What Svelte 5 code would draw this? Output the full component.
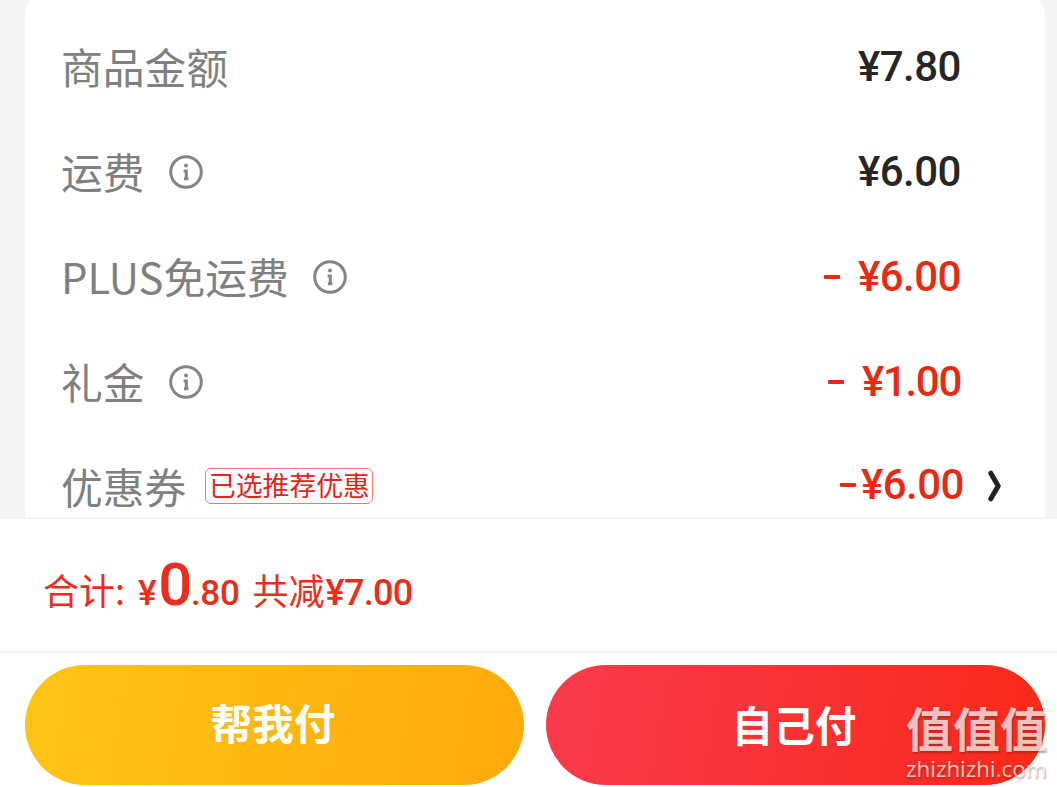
<script lang="ts">
  interface Row {
    label: string;
    info?: boolean;
    tag?: string;
    minus?: "wide" | "tight";
    amount: string;
    arrow?: boolean;
  }

  const rows: Row[] = [
    { label: "商品金额", amount: "7.80" },
    { label: "运费", info: true, amount: "6.00" },
    { label: "PLUS免运费", info: true, minus: "wide", amount: "6.00" },
    { label: "礼金", info: true, minus: "wide", amount: "1.00" },
    {
      label: "优惠券",
      tag: "已选推荐优惠",
      minus: "tight",
      amount: "6.00",
      arrow: true,
    },
  ];
</script>

<main class="page">
  <section class="list">
    <div class="card">
      {#each rows as row (row.label)}
        <div class="row">
          <span class="label">{row.label}</span>
          {#if row.info}
            <svg class="info" viewBox="0 0 34 34" width="34" height="34">
              <circle cx="17" cy="17" r="15.3" />
              <circle class="dot" cx="17" cy="10.4" r="2" />
              <path d="M14.6 16h2.7v8M15 23.8h4.4" />
            </svg>
          {/if}
          {#if row.tag}
            <span class="tag">{row.tag}</span>
          {/if}
          <span class="value" class:discount={row.minus} class:linked={row.arrow}>
            {#if row.minus}
              <i class="minus {row.minus}"></i>
            {/if}
            <span class="num" class:one={row.amount.startsWith("1")}>¥{row.amount}</span>
          </span>
          {#if row.arrow}
            <svg class="arrow" viewBox="0 0 14 32" width="14" height="32">
              <path d="M2.8 3.2L10.2 16L2.8 28.8" />
            </svg>
          {/if}
        </div>
      {/each}
    </div>
  </section>

  <section class="total">
    <span class="cn">合计:</span>
    <span class="num yen">¥</span>
    <span class="num big">0</span>
    <span class="num cents">.80</span>
    <span class="cn saved">共减</span>
    <span class="num off">¥7.00</span>
  </section>

  <footer class="actions">
    <button class="help">帮我付</button>
    <button class="self">自己付</button>
  </footer>

  <div class="watermark">
    <div class="mark">值值值</div>
    <div class="site">zhizhizhi.com</div>
  </div>
</main>

<style>
  :global(body) {
    background: #fff;
  }

  .page {
    position: relative;
    width: 1057px;
    height: 787px;
    overflow: hidden;
    background: #fff;
    font-family: "Noto Sans CJK SC", sans-serif;
  }

  .list {
    box-sizing: border-box;
    height: 519px;
    padding: 0 12px 0 25px;
    overflow: hidden;
    background: #f4f4f4;
    border-bottom: 2px solid #f4f4f4;
  }

  .card {
    box-sizing: border-box;
    height: 560px;
    margin-top: -6px;
    padding: 20px 36px 0 36px;
    border-radius: 20px;
    background: #fff;
  }

  .row {
    display: flex;
    align-items: center;
    height: 105px;
  }

  .label {
    margin-bottom: 2px;
    font-size: 41.8px;
    line-height: 60px;
    color: #808080;
    white-space: nowrap;
  }

  .info {
    margin: 0 0 0 24px;
    fill: none;
    stroke: #858585;
    stroke-width: 3;
  }

  .info .dot {
    fill: #858585;
    stroke: none;
  }

  .tag {
    box-sizing: border-box;
    width: 168px;
    height: 36px;
    margin: 0 0 1px 19px;
    border: 1px solid #e8796c;
    border-radius: 6px;
    font-size: 26.8px;
    line-height: 31px;
    text-align: center;
    white-space: nowrap;
    color: #e1251b;
  }

  .value {
    display: flex;
    align-items: center;
    margin: 1px 48px 0 auto;
    color: #262626;
  }

  .value.linked {
    margin-right: 2px;
    margin-bottom: 4px;
  }

  .discount {
    color: #e62b15;
  }

  .num {
    font-family: Roboto, sans-serif;
    font-weight: 500;
    font-size: 42px;
    line-height: 50px;
    letter-spacing: -0.5px;
  }

  .num.one {
    letter-spacing: -1.3px;
  }

  .minus {
    width: 16px;
    height: 4px;
    border-radius: 1px;
    background: currentColor;
  }

  .minus.wide {
    margin-right: 18px;
  }

  .minus.tight {
    margin-right: 5px;
  }

  .arrow {
    margin: 0 7px 2px 22px;
    fill: none;
    stroke: #222;
    stroke-width: 5;
    stroke-linecap: round;
    stroke-linejoin: round;
  }

  .total {
    box-sizing: border-box;
    display: flex;
    align-items: baseline;
    height: 134px;
    padding: 41px 0 0 43px;
    border-bottom: 2px solid #f4f4f4;
    color: #ee2c1c;
  }

  .cn {
    font-size: 36px;
    line-height: 52px;
  }

  .yen,
  .cents {
    font-size: 35px;
    letter-spacing: -0.3px;
  }

  .yen {
    margin-left: 13px;
  }

  .big {
    margin-left: 2px;
    font-size: 60px;
    letter-spacing: -1.5px;
  }

  .saved {
    margin-left: 13px;
  }

  .off {
    margin-left: 1px;
    font-size: 36px;
    letter-spacing: -0.7px;
  }

  .actions {
    display: flex;
    gap: 22px;
    padding: 12px 12px 0 25px;
  }

  button {
    flex: 1;
    height: 120px;
    padding: 0 3px 2px 0;
    border: 0;
    border-radius: 60px;
    font: 700 41.6px/118px "Noto Sans CJK SC", sans-serif;
    color: #fff;
  }

  .help {
    padding-bottom: 6px;
    line-height: 114px;
    background: linear-gradient(100deg, #ffc418, #ffaa0b);
  }

  .self {
    background: linear-gradient(100deg, #f93b4d, #f92e2a 70%, #fb2916);
  }

  .watermark {
    position: absolute;
    left: 906px;
    top: 702px;
    color: rgba(255, 255, 255, 0.72);
    white-space: nowrap;
    text-shadow: 1px 2px 2px rgba(100, 30, 30, 0.42);
  }

  .mark {
    height: 55px;
    font-size: 47px;
    font-weight: 700;
    line-height: 50px;
  }

  .site {
    font: 500 22.4px/24px "Open Sans", sans-serif;
  }
</style>
